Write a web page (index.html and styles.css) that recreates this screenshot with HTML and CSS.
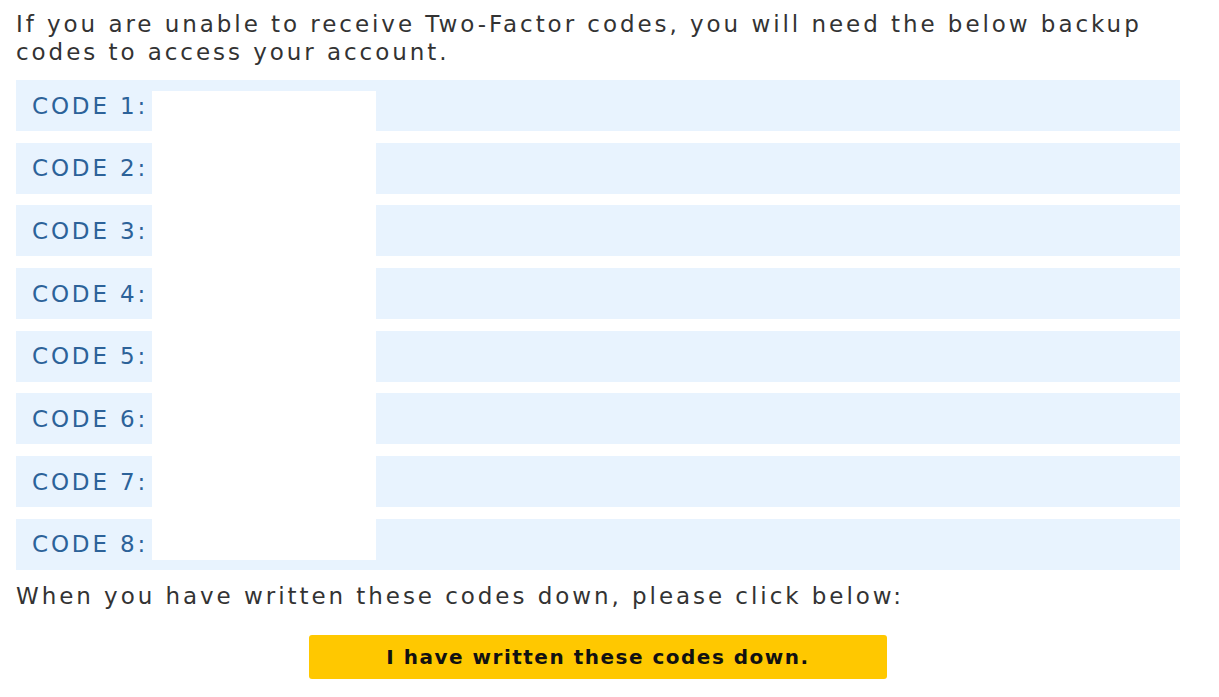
FILE: index.html
```html
<!DOCTYPE html>
<html>
<head>
<meta charset="utf-8">
<link rel="stylesheet" href="styles.css">
</head>
<body>
<div class="page">
  <p class="intro">If you are unable to receive Two-Factor codes, you will need the below backup codes to access your account.</p>
  <div class="codes">
    <div class="row first"><span class="label">CODE 1:</span><span class="value"></span><span class="fill"></span></div>
    <div class="row"><span class="label">CODE 2:</span><span class="value"></span><span class="fill"></span></div>
    <div class="row"><span class="label">CODE 3:</span><span class="value"></span><span class="fill"></span></div>
    <div class="row"><span class="label">CODE 4:</span><span class="value"></span><span class="fill"></span></div>
    <div class="row"><span class="label">CODE 5:</span><span class="value"></span><span class="fill"></span></div>
    <div class="row"><span class="label">CODE 6:</span><span class="value"></span><span class="fill"></span></div>
    <div class="row"><span class="label">CODE 7:</span><span class="value"></span><span class="fill"></span></div>
    <div class="row last"><span class="label">CODE 8:</span><span class="value"></span><span class="fill"></span></div>
  </div>
  <p class="outro">When you have written these codes down, please click below:</p>
  <div class="actions"><button class="confirm">I have written these codes down.</button></div>
</div>
</body>
</html>
```
FILE: styles.css
```css
html, body {
  margin: 0;
  padding: 0;
  background: #ffffff;
}
.page {
  padding: 10px 39px 0 16px;
  font-family: "DejaVu Sans", sans-serif;
  color: #333333;
}
.intro {
  margin: 0 0 14px 0;
  font-size: 23px;
  line-height: 28px;
  letter-spacing: 2.95px;
}
.codes {
  display: flex;
  flex-direction: column;
  gap: 11.7px;
}
.row {
  display: flex;
  height: 51px;
  background: #e8f3fe;
  align-items: stretch;
}
.label {
  width: 120px;
  padding-left: 16px;
  display: flex;
  align-items: center;
  font-size: 23px;
  color: #2c6299;
  letter-spacing: 2.85px;
  white-space: nowrap;
  overflow: hidden;
}
.value {
  width: 224px;
  background: #ffffff;
}
.fill {
  flex: 1;
}
.row.first .value {
  margin-top: 11px;
}
.row.last .value {
  margin-bottom: 10px;
}
.outro {
  margin: 12px 0 0 0;
  font-size: 23px;
  line-height: 28px;
  letter-spacing: 2.95px;
}
.actions {
  display: flex;
  justify-content: center;
  margin-top: 25px;
}
.confirm {
  width: 578px;
  height: 44px;
  border: none;
  border-radius: 3px;
  background: #ffc800;
  color: #111111;
  font-family: "DejaVu Sans", sans-serif;
  font-weight: bold;
  font-size: 20px;
  letter-spacing: 1.5px;
}
```
